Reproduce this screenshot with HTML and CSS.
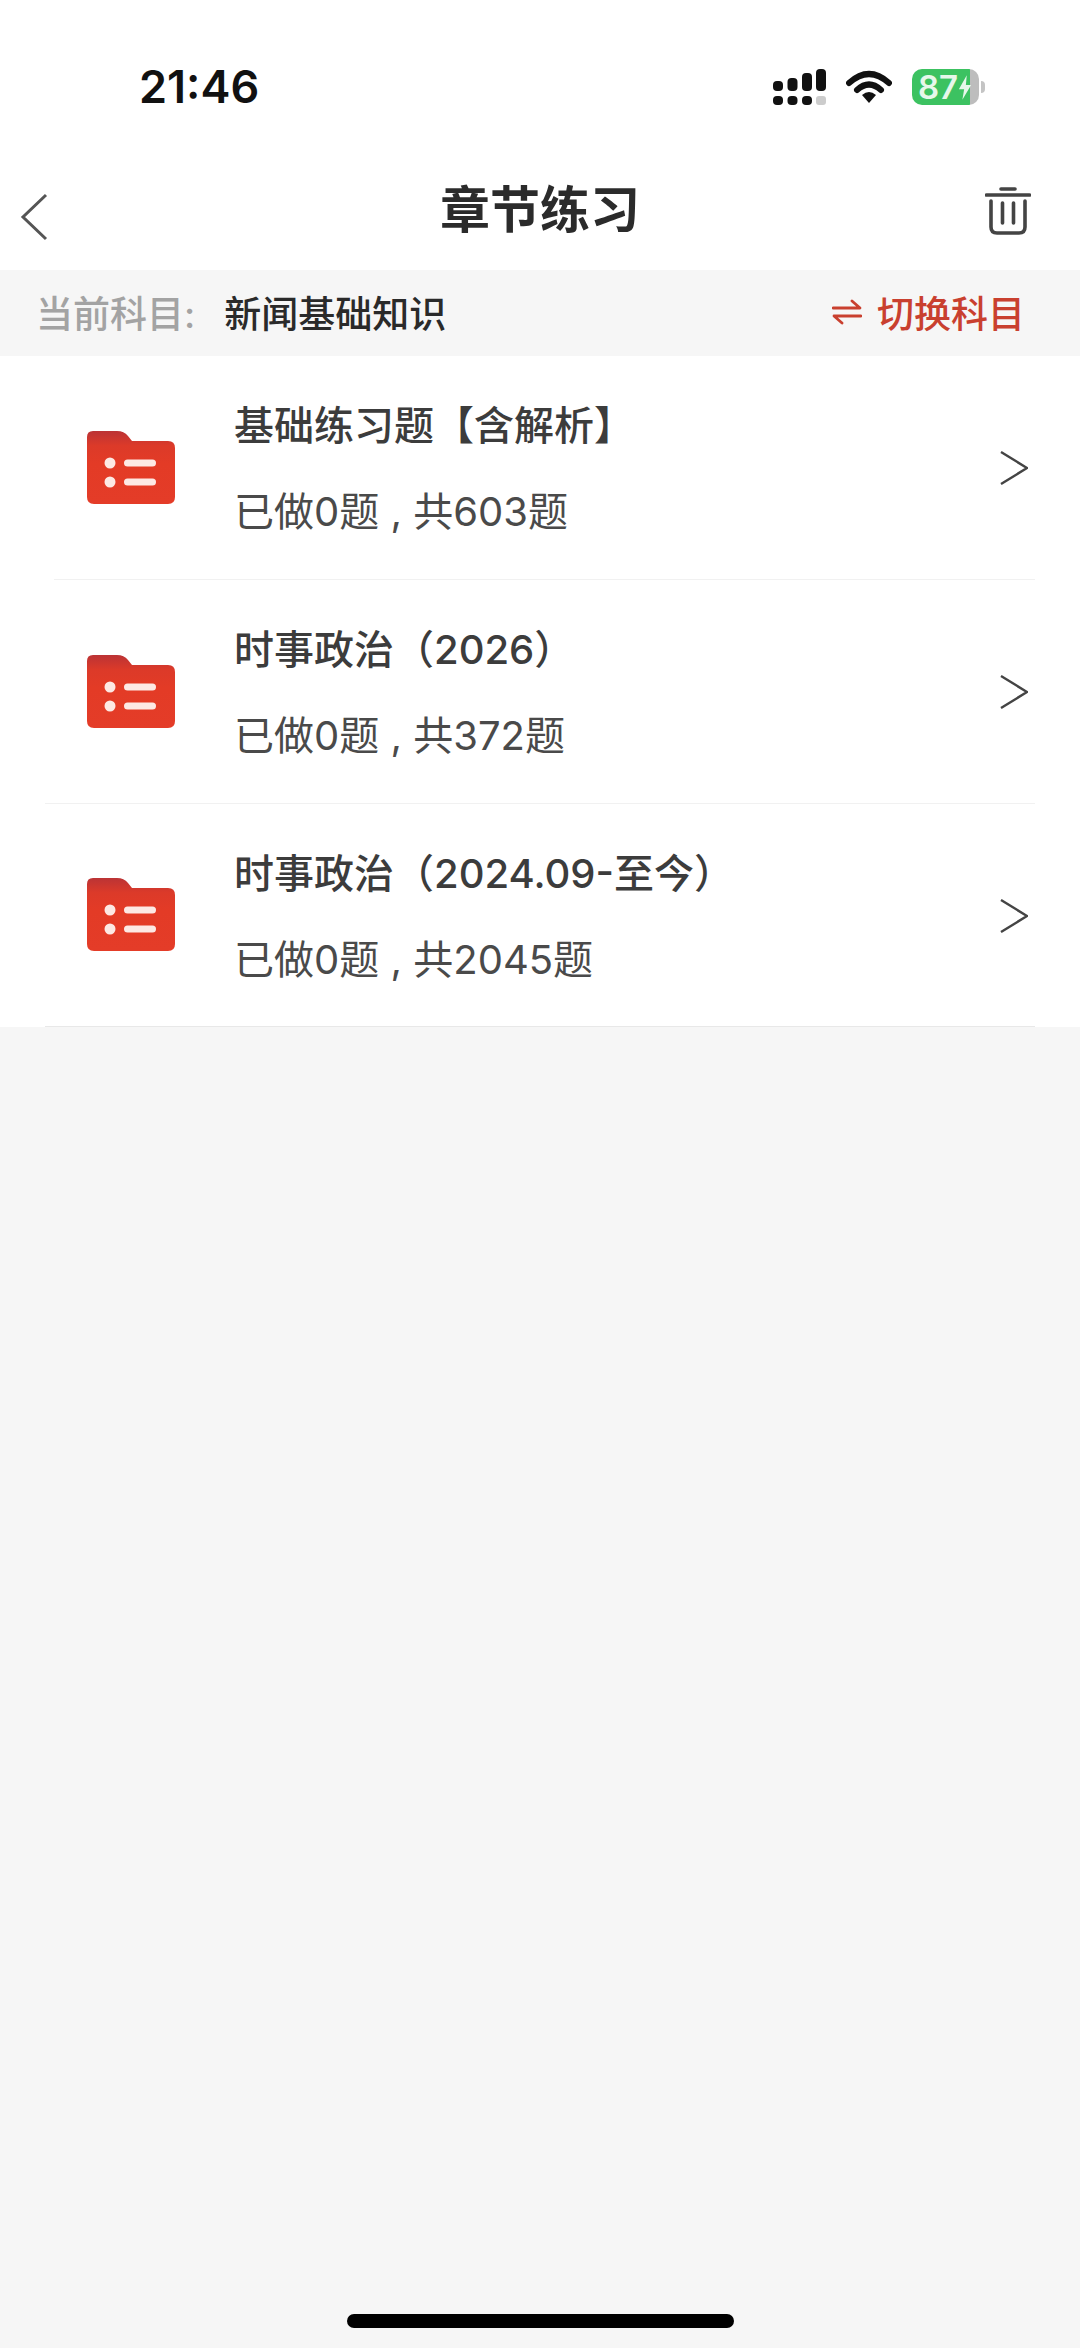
FILE: index.html
```html
<!DOCTYPE html>
<html lang="zh-CN">
<head>
<meta charset="utf-8">
<title>章节练习</title>
<link rel="stylesheet" href="styles.css">
</head>
<body>
<div class="page">
  <header class="top">
    <div class="status">
      <span class="time">21:46</span>
      <div class="status-icons">
        <svg class="signal" viewBox="0 0 53 36" width="53" height="36">
          <g fill="#111">
            <rect x="0" y="12" width="10" height="10" rx="4"/>
            <rect x="14.500" y="9" width="10" height="13" rx="4"/>
            <rect x="29" y="4" width="10" height="18" rx="4"/>
            <rect x="43" y="0" width="10" height="22" rx="4"/>
            <rect x="0" y="27" width="10" height="9" rx="4"/>
            <rect x="14.500" y="27" width="10" height="9" rx="4"/>
            <rect x="29" y="27" width="10" height="9" rx="4"/>
          </g>
          <rect x="43" y="27" width="10" height="9" rx="3" fill="#ccc"/>
        </svg>
        <svg class="wifi" viewBox="0 0 46 34" width="46" height="34">
          <path d="M3 13 Q23 -5 43 13" fill="none" stroke="#111" stroke-width="6" stroke-linecap="round"/>
          <path d="M11 20 Q23 9 35 20" fill="none" stroke="#111" stroke-width="6" stroke-linecap="round"/>
          <path d="M16 25 Q23 19 30 25 L23 33 Z" fill="#111"/>
        </svg>
        <div class="battery">
          <div class="battery-body"><span class="battery-num">87</span>
            <svg class="bolt" viewBox="0 0 16 28" width="14" height="25"><path d="M10 0 L1 16 H7 L5 28 L15 11 H9 Z" fill="#e6f7ea"/></svg>
          </div>
          <span class="battery-nub"></span>
        </div>
      </div>
    </div>
    <nav class="nav">
      <svg class="back" viewBox="0 0 28 48" width="28" height="48"><path d="M26 2 L3 24 L26 46" fill="none" stroke="#555" stroke-width="3"/></svg>
      <h1 class="nav-title">章节练习</h1>
      <svg class="trash" viewBox="0 0 46 48" width="46" height="48">
        <g fill="none" stroke="#444" stroke-linecap="round" stroke-width="3.6">
          <path d="M16 2 H30"/>
          <path d="M1.5 8 H44.5"/>
          <path d="M6 14 V40 Q6 46 12 46 H34 Q40 46 40 40 V14"/>
          <path d="M17.500 16 V36"/>
          <path d="M28.500 16 V36"/>
        </g>
      </svg>
    </nav>
  </header>

  <section class="subject">
    <div class="subject-current">
      <span class="subject-label">当前科目:</span>
      <span class="subject-name">新闻基础知识</span>
    </div>
    <div class="subject-switch">
      <svg class="swap" viewBox="0 0 30 26" width="30" height="26">
        <g fill="none" stroke="#c9402f" stroke-width="2.800" stroke-linecap="round" stroke-linejoin="round">
          <path d="M1 9 H28 L20 2"/>
          <path d="M29 17 H2 L10 24"/>
        </g>
      </svg>
      <span>切换科目</span>
    </div>
  </section>

  <ul class="list">
    <li class="row row-first">
      <svg class="folder" viewBox="0 0 88 73" width="88" height="73"><use href="#folder-icon"/></svg>
      <div class="row-text">
        <div class="row-title">基础练习题【含解析】</div>
        <div class="row-sub">已做0题 , 共603题</div>
      </div>
      <svg class="chev" viewBox="0 0 28 34" width="28" height="34"><path d="M1 1 L27 17 L1 33" fill="none" stroke="#444" stroke-width="2.400"/></svg>
    </li>
    <li class="row">
      <svg class="folder" viewBox="0 0 88 73" width="88" height="73"><use href="#folder-icon"/></svg>
      <div class="row-text">
        <div class="row-title">时事政治（2026）</div>
        <div class="row-sub">已做0题 , 共372题</div>
      </div>
      <svg class="chev" viewBox="0 0 28 34" width="28" height="34"><path d="M1 1 L27 17 L1 33" fill="none" stroke="#444" stroke-width="2.400"/></svg>
    </li>
    <li class="row">
      <svg class="folder" viewBox="0 0 88 73" width="88" height="73"><use href="#folder-icon"/></svg>
      <div class="row-text">
        <div class="row-title">时事政治（2024.09-至今）</div>
        <div class="row-sub">已做0题 , 共2045题</div>
      </div>
      <svg class="chev" viewBox="0 0 28 34" width="28" height="34"><path d="M1 1 L27 17 L1 33" fill="none" stroke="#444" stroke-width="2.400"/></svg>
    </li>
  </ul>

  <div class="home-bar"></div>
</div>

<svg class="defs" width="0" height="0" aria-hidden="true">
  <defs>
    <linearGradient id="folder-fill" x1="0" y1="0" x2="0" y2="1">
      <stop offset="0" stop-color="#bb3335"/>
      <stop offset="0.2" stop-color="#dc3a29"/>
      <stop offset="0.45" stop-color="#e33b26"/>
      <stop offset="1" stop-color="#e43c28"/>
    </linearGradient>
    <symbol id="folder-icon" viewBox="0 0 88 73">
      <path d="M6 0 H30 Q37 0 41 5 L45 10 H81 Q88 10 88 17 V66 Q88 73 81 73 H7 Q0 73 0 66 V6 Q0 0 6 0 Z" fill="url(#folder-fill)"/>
      <circle cx="23" cy="32" r="5.500" fill="#fde9e4"/>
      <circle cx="23" cy="51" r="5.500" fill="#fde9e4"/>
      <rect x="37" y="28.500" width="32" height="7" rx="3.500" fill="#fde9e4"/>
      <rect x="37" y="47.500" width="32" height="7" rx="3.500" fill="#fde9e4"/>
    </symbol>
  </defs>
</svg>
</body>
</html>
```

FILE: styles.css
```css
* {
  box-sizing: border-box;
}

html,
body {
  margin: 0;
  padding: 0;
}

body {
  font-family: Inter, "Noto Sans CJK SC", sans-serif;
  background: #f6f6f6;
  color: #333;
}

.page {
  display: flex;
  flex-direction: column;
  height: 2348px;
  overflow: hidden;
}

.top {
  background: #fff;
  height: 270px;
  display: flex;
  flex-direction: column;
}

.status {
  height: 125px;
  padding: 63px 95px 0 139px;
  display: flex;
  justify-content: space-between;
  align-items: flex-start;
}

.time {
  font-size: 45px;
  line-height: 48px;
  font-weight: 600;
  color: #111;
}

.status-icons {
  display: flex;
  align-items: center;
  gap: 20px;
  margin-top: 6px;
}

.signal,
.wifi {
  display: block;
}

.battery {
  display: flex;
  align-items: center;
  gap: 2px;
}

.battery-body {
  width: 67px;
  height: 36px;
  border-radius: 10px;
  background: linear-gradient(90deg, #3cc261 0 86%, #bdbdbd 86% 100%);
  display: flex;
  align-items: center;
  padding-left: 6px;
}

.battery-num {
  font-size: 33px;
  line-height: 36px;
  font-weight: 600;
  color: #e6f7ea;
}

.bolt {
  display: block;
}

.battery-nub {
  width: 4px;
  height: 12px;
  border-radius: 0 4px 4px 0;
  background: #c4c4c4;
}

.nav {
  flex: 1;
  display: grid;
  grid-template-columns: 1fr auto 1fr;
  align-items: center;
  padding: 24px 20px 0;
}

.back {
  margin-top: 14px;
}

.trash {
  justify-self: end;
  margin-right: 29px;
  margin-top: 2px;
}

.nav-title {
  margin: 0;
  font-size: 50px;
  line-height: 60px;
  font-weight: 700;
  color: #2b2b2b;
}

.subject {
  height: 86px;
  background: #f6f6f6;
  display: flex;
  align-items: center;
  justify-content: space-between;
  padding: 0 55px 2px 36px;
}

.subject-current {
  display: flex;
  align-items: center;
  gap: 29px;
}

.subject-label {
  font-size: 37px;
  font-weight: 500;
  color: #a3a3a3;
}

.subject-name {
  font-size: 37px;
  font-weight: 500;
  color: #2a2a2a;
}

.subject-switch {
  display: flex;
  align-items: center;
  gap: 15px;
  font-size: 37px;
  font-weight: 500;
  color: #c9402f;
}

.list {
  list-style: none;
  margin: 0;
  padding: 0;
  background: #fff;
}

.row {
  height: 224px;
  margin: 0 45px 0 0;
  padding: 0 7px 0 87px;
  display: flex;
  align-items: center;
  position: relative;
}

.row:last-child {
  height: 223px;
}

.row::after {
  content: "";
  position: absolute;
  left: 45px;
  right: 0;
  bottom: 0;
  height: 1px;
  background: #f1f1f1;
}

.row:last-child::after {
  background: #e8e8e8;
}

.row-first::after {
  left: 54px;
}

.folder {
  flex: none;
  display: block;
  margin-top: -2px;
}

.row-text {
  flex: 1;
  margin-left: 59px;
  display: flex;
  flex-direction: column;
  gap: 36px;
  padding-top: 2px;
}

.row-title {
  font-size: 40px;
  line-height: 50px;
  font-weight: 500;
  color: #3c3c3c;
}

.row-sub {
  font-size: 40px;
  line-height: 50px;
  color: #4a4a4a;
}

.chev {
  flex: none;
  display: block;
}

.home-bar {
  margin: auto auto 20px;
  width: 387px;
  height: 14px;
  border-radius: 7px;
  background: #000;
}

.defs {
  position: absolute;
}
```
